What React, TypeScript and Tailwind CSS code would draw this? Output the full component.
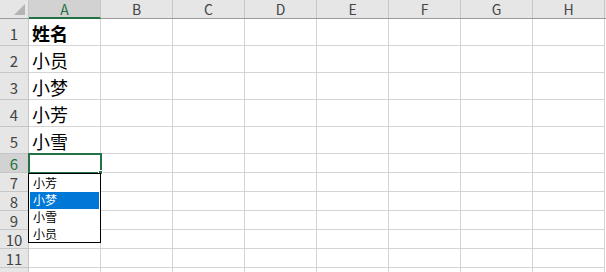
import type { FC } from "react"

const COLS = ["A", "B", "C", "D", "E", "F", "G", "H"]
const TALL = ["姓名", "小员", "小梦", "小芳", "小雪"]
const OPTIONS = ["小芳", "小梦", "小雪", "小员"]

const font = { fontFamily: '"Noto Sans CJK SC", "Noto Sans", sans-serif' }

const App: FC = () => {
  return (
    <div className="w-[606px] h-[272px] overflow-hidden bg-white relative" style={font}>
      {/* column header */}
      <div className="flex h-[19px] bg-[#e6e6e6] border-b border-[#9b9b9b]">
        <div className="w-[29px] shrink-0 border-r border-[#c6c6c6] relative">
          <div className="absolute right-[3px] bottom-[3px] w-0 h-0 border-l-[11px] border-l-transparent border-b-[11px] border-b-[#b4b4b4]" />
        </div>
        {COLS.map(c => (
          <div
            key={c}
            className={
              c === "A"
                ? "w-[72px] shrink-0 border-r border-[#c6c6c6] bg-[#d2d2d2] text-[#217346] text-[14px] leading-[18px] text-center border-b-2 border-b-[#217346] -mb-px"
                : "w-[72px] shrink-0 border-r border-[#c6c6c6] text-[#444] text-[14px] leading-[18px] text-center"
            }
          >
            {c}
          </div>
        ))}
      </div>

      {/* tall rows */}
      {TALL.map((name, i) => (
        <div key={i} className="flex h-[27px]">
          <div className="w-[29px] shrink-0 bg-[#e6e6e6] border-r border-b border-[#c6c6c6] text-[#444] text-[15px] leading-[30px] text-center">
            {i + 1}
          </div>
          {COLS.map((c, j) => (
            <div
              key={c}
              className={
                j === 0
                  ? `w-[72px] shrink-0 border-r border-b border-[#d4d4d4] pl-[3px] text-[18px] leading-[28px] text-black ${i === 0 ? "font-bold" : ""}`
                  : "w-[72px] shrink-0 border-r border-b border-[#d4d4d4]"
              }
            >
              {j === 0 ? name : ""}
            </div>
          ))}
        </div>
      ))}

      {/* short rows */}
      {[6, 7, 8, 9, 10, 11, 12].map(n => (
        <div key={n} className="flex h-[19px]">
          <div
            className={
              n === 6
                ? "w-[29px] shrink-0 bg-[#d2d2d2] border-r border-b border-[#c6c6c6] text-[#217346] text-[15px] leading-[20px] text-center"
                : "w-[29px] shrink-0 bg-[#e6e6e6] border-r border-b border-[#c6c6c6] text-[#444] text-[15px] leading-[20px] text-center"
            }
          >
            {n < 12 ? n : ""}
          </div>
          {COLS.map(c => (
            <div key={c} className="w-[72px] shrink-0 border-r border-b border-[#d4d4d4]" />
          ))}
        </div>
      ))}

      {/* active cell A6 */}
      <div className="absolute left-[28px] top-[153px] w-[74px] h-[21px] border-2 border-[#217346]" />
      <div className="absolute left-[98px] top-[170px] w-[5px] h-[5px] bg-[#217346] border border-white" />

      {/* validation dropdown */}
      <div className="absolute left-[28px] top-[173px] w-[73px] h-[70px] bg-white border border-black p-px text-[12px] text-black">
        {OPTIONS.map((o, i) => (
          <div
            key={o}
            className={
              i === 1
                ? "h-[17px] leading-[16px] pl-[3px] bg-[#0078d7] text-white"
                : "h-[17px] leading-[16px] pl-[3px]"
            }
          >
            {o}
          </div>
        ))}
      </div>
    </div>
  )
}

export default App
